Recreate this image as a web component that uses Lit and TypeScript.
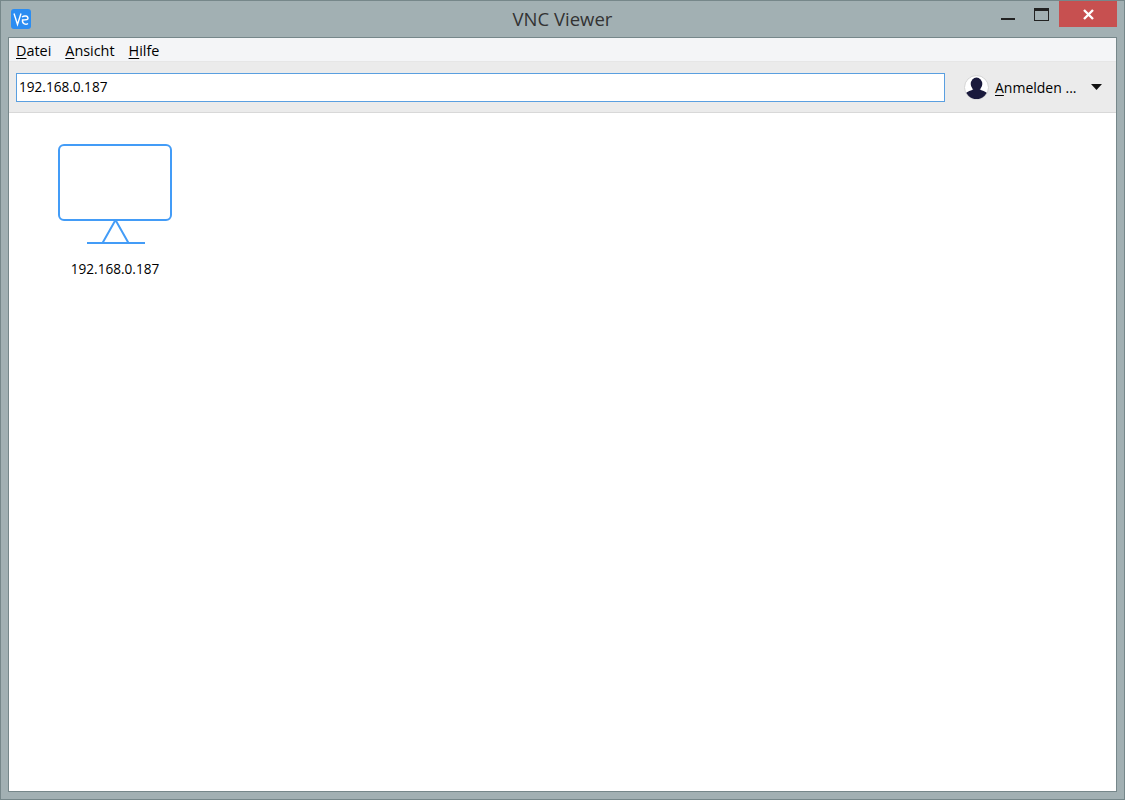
import { LitElement, html, css } from "lit";
import { customElement } from "lit/decorators.js";

@customElement("app-root")
export class AppRoot extends LitElement {
  static styles = css`
    :host {
      display: block;
      width: 1125px;
      height: 800px;
      font-family: "Open Sans", "Noto Sans", sans-serif;
      color: #000;
    }
    .window {
      box-sizing: border-box;
      width: 100%;
      height: 100%;
      display: flex;
      flex-direction: column;
      background: #a2b0b3;
      border: 1px solid #76878a;
      padding: 0 7px 7px;
    }
    .titlebar {
      height: 36px;
      flex: none;
      display: grid;
      grid-template-columns: 1fr auto 1fr;
    }
    .logo {
      width: 20px;
      height: 20px;
      margin: 8px 0 0 3px;
      display: block;
    }
    .title {
      font-size: 18.5px;
      line-height: 20px;
      padding-top: 8px;
      color: #333;
    }
    .controls {
      display: flex;
      justify-content: flex-end;
      align-items: flex-start;
    }
    .ctl {
      display: flex;
    }
    .min {
      margin-top: 17px;
      width: 14px;
      height: 2px;
      background: #222;
    }
    .max {
      box-sizing: border-box;
      margin: 7px 0 0 19px;
      width: 15px;
      height: 13px;
      border: 1px solid #222;
      border-top-width: 3px;
    }
    .close {
      margin-left: 10px;
      width: 58px;
      height: 26px;
      background: #c75050;
      align-items: center;
      justify-content: center;
    }
    .close svg {
      display: block;
    }
    .client {
      flex: 1;
      display: flex;
      flex-direction: column;
      min-height: 0;
      border: 1px solid #76878a;
      background: #fff;
    }
    .menubar {
      box-sizing: border-box;
      height: 23px;
      flex: none;
      display: flex;
      gap: 14px;
      align-items: center;
      padding: 3px 0 0 7px;
      background: #f4f5f7;
      font-size: 14.4px;
      line-height: 20px;
    }
    .menubar u,
    .user u {
      text-underline-offset: 2px;
    }
    .toolbar {
      box-sizing: border-box;
      height: 52px;
      flex: none;
      display: flex;
      align-items: center;
      padding: 0 0 0 7px;
      background: #ebebeb;
      border-top: 1px solid #e6e6e6;
      border-bottom: 1px solid #d8d8d8;
    }
    .address {
      box-sizing: border-box;
      flex: 1;
      height: 29px;
      min-width: 0;
      margin-top: 1px;
      padding: 0 2px;
      border: 1px solid #5a9fe0;
      background: #fff;
      font-size: 13.6px;
      line-height: 26px;
    }
    .user {
      flex: none;
      width: 171px;
      box-sizing: border-box;
      padding-left: 19px;
      display: flex;
      align-items: center;
      font-size: 14px;
    }
    .user svg.avatar {
      display: block;
      margin-right: 6px;
    }
    .user .name {
      width: 96px;
    }
    .content {
      flex: 1;
      padding: 31px 0 0 49px;
    }
    .item {
      width: 114px;
      display: flex;
      flex-direction: column;
      align-items: center;
      gap: 15px;
      font-size: 13.6px;
      line-height: 18px;
    }
    .item svg {
      display: block;
    }
  `;

  render() {
    return html`
      <div class="window">
        <div class="titlebar">
          <svg class="logo" viewBox="0 0 20 20">
            <rect width="20" height="20" rx="3" fill="#2b8df2"></rect>
            <path d="M3 4.5 L6.5 15.5 L10 4.5" fill="none" stroke="#fff" stroke-width="1.4"></path>
            <path d="M11 8 C13 6.5 17 6.5 17 9.5 C17 11 14 11 11.5 11 C11 15 15 16 17 14.5" fill="none" stroke="#fff" stroke-width="1.4"></path>
          </svg>
          <div class="title">VNC Viewer</div>
          <div class="controls">
            <div class="ctl min"></div>
            <div class="ctl max"></div>
            <div class="ctl close">
              <svg width="11" height="11" viewBox="0 0 11 11">
                <path d="M1 1 L10 10 M10 1 L1 10" stroke="#fff" stroke-width="2.4" fill="none"></path>
              </svg>
            </div>
          </div>
        </div>
        <div class="client">
          <div class="menubar">
            <span><u>D</u>atei</span>
            <span><u>A</u>nsicht</span>
            <span><u>H</u>ilfe</span>
          </div>
          <div class="toolbar">
            <div class="address">192.168.0.187</div>
            <div class="user">
              <svg class="avatar" width="25" height="25" viewBox="0 0 25 25">
                <defs>
                  <clipPath id="c"><circle cx="12.5" cy="12.5" r="11.5"></circle></clipPath>
                </defs>
                <circle cx="12.5" cy="12.5" r="12" fill="#fff" stroke="#d4d4d4"></circle>
                <g clip-path="url(#c)" fill="#1a1a3c">
                  <ellipse cx="12.5" cy="9" rx="5.8" ry="6.5"></ellipse>
                  <path d="M0 25 V20 C2 16.5 7 16 9.5 14 H15.5 C18 16 23 16.5 25 20 V25 Z"></path>
                </g>
              </svg>
              <span class="name"><u>A</u>nmelden ...</span>
              <svg width="11" height="6" viewBox="0 0 11 6"><path d="M0 0 H11 L5.5 6 Z" fill="#111"></path></svg>
            </div>
          </div>
          <div class="content">
            <div class="item">
              <svg width="114" height="101" viewBox="0 0 114 101">
                <g fill="none" stroke="#439cf7" stroke-width="2">
                  <rect x="1" y="1" width="112" height="75" rx="5"></rect>
                  <path d="M57.5 76 L44.5 99 M57.5 76 L70.5 99"></path>
                  <path d="M29 99 H87"></path>
                </g>
              </svg>
              <span>192.168.0.187</span>
            </div>
          </div>
        </div>
      </div>
    `;
  }
}
